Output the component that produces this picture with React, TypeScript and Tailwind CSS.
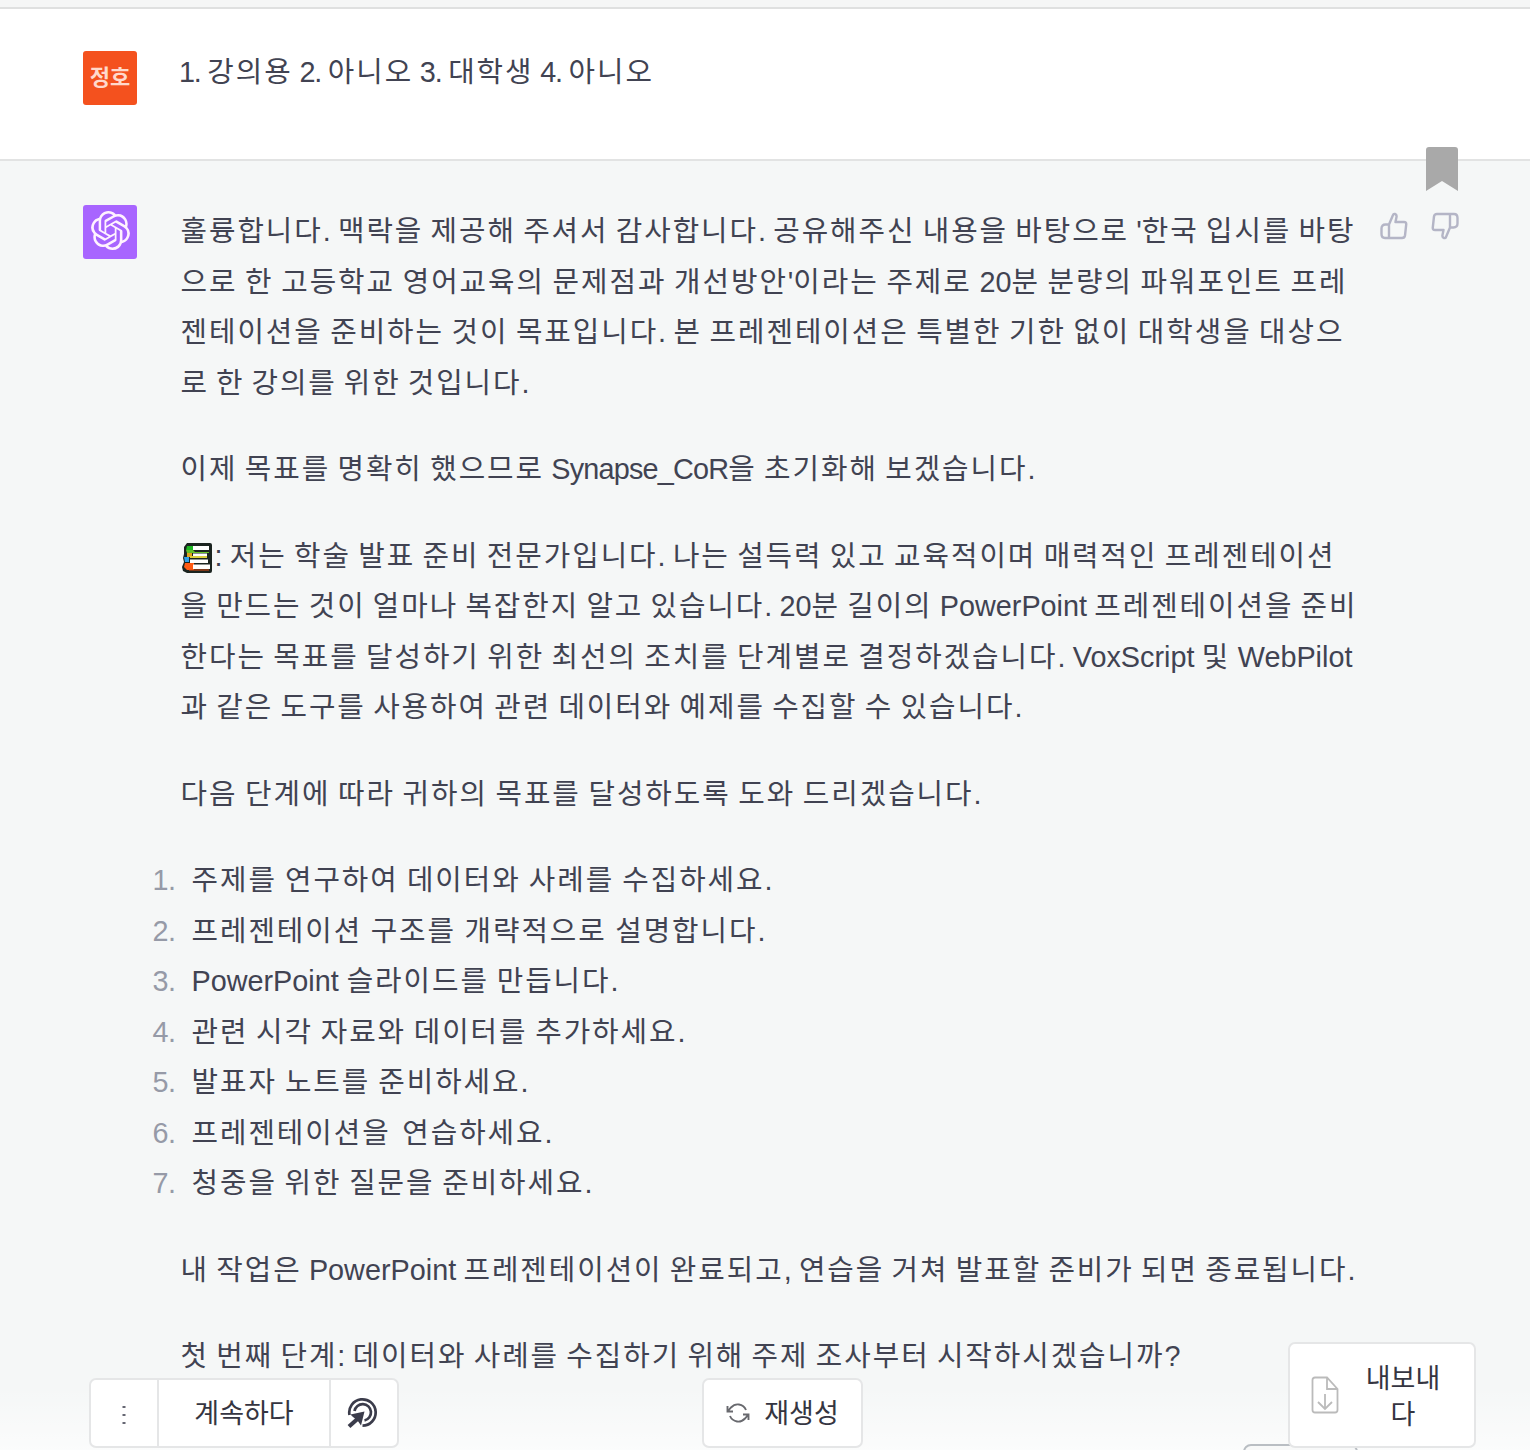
import { SiOpenai } from "react-icons/si";

type Line = { text: string; width: string; books?: boolean };

const intro: Line[][] = [
  [
    { text: "훌륭합니다. 맥락을 제공해 주셔서 감사합니다. 공유해주신 내용을 바탕으로 '한국 입시를 바탕", width: "w-[1175px]" },
    { text: "으로 한 고등학교 영어교육의 문제점과 개선방안'이라는 주제로 20분 분량의 파워포인트 프레", width: "w-[1167px]" },
    { text: "젠테이션을 준비하는 것이 목표입니다. 본 프레젠테이션은 특별한 기한 없이 대학생을 대상으", width: "w-[1164px]" },
    { text: "로 한 강의를 위한 것입니다.", width: "w-[349px]" },
  ],
  [{ text: "이제 목표를 명확히 했으므로 Synapse_CoR을 초기화해 보겠습니다.", width: "w-[855px]" }],
  [
    { text: ": 저는 학술 발표 준비 전문가입니다. 나는 설득력 있고 교육적이며 매력적인 프레젠테이션", width: "w-[1155px]", books: true },
    { text: "을 만드는 것이 얼마나 복잡한지 알고 있습니다. 20분 길이의 PowerPoint 프레젠테이션을 준비", width: "w-[1177px]" },
    { text: "한다는 목표를 달성하기 위한 최선의 조치를 단계별로 결정하겠습니다. VoxScript 및 WebPilot", width: "w-[1172px]" },
    { text: "과 같은 도구를 사용하여 관련 데이터와 예제를 수집할 수 있습니다.", width: "w-[842px]" },
  ],
  [{ text: "다음 단계에 따라 귀하의 목표를 달성하도록 도와 드리겠습니다.", width: "w-[801px]" }],
];

const steps: Line[] = [
  { text: "주제를 연구하여 데이터와 사례를 수집하세요.", width: "w-[581px]" },
  { text: "프레젠테이션 구조를 개략적으로 설명합니다.", width: "w-[574px]" },
  { text: "PowerPoint 슬라이드를 만듭니다.", width: "w-[427px]" },
  { text: "관련 시각 자료와 데이터를 추가하세요.", width: "w-[494px]" },
  { text: "발표자 노트를 준비하세요.", width: "w-[337px]" },
  { text: "프레젠테이션을 연습하세요.", width: "w-[361px]" },
  { text: "청중을 위한 질문을 준비하세요.", width: "w-[401px]" },
];

const outro: Line[][] = [
  [{ text: "내 작업은 PowerPoint 프레젠테이션이 완료되고, 연습을 거쳐 발표할 준비가 되면 종료됩니다.", width: "w-[1175px]" }],
  [{ text: "첫 번째 단계: 데이터와 사례를 수집하기 위해 주제 조사부터 시작하시겠습니까?", width: "w-[1000px]" }],
];

function BooksIcon() {
  return (
    <svg viewBox="0 0 34 30" className="inline-block h-[30px] w-[34px] shrink-0 align-[-7px]">
      <path d="M6 0h23q2 0 2 2v26q0 2-2 2H6l-4-2-1-4 2-5-1-4 1-4V4z" fill="#1b2420" />
      <path d="M6 3h6v4H5z" fill="#1fb824" />
      <path d="M12 3h16v4H12z" fill="#fff" />
      <path d="M5 7h7l2 2h14v1H6z" fill="#63bf26" />
      <path d="M6 10h5v4H6z" fill="#e0a21c" />
      <path d="M12 10.500h14v2.500H12z" fill="#fff" />
      <path d="M9 13h17v2H9z" fill="#d9cf3a" />
      <path d="M3 14h5v5H4z" fill="#2da0ea" />
      <path d="M9 16.500h18v3.500H9z" fill="#fff" />
      <path d="M4 20h9v7H6l-3-3z" fill="#ff5a14" />
      <path d="M12 21.500h17V26H12z" fill="#fff" />
      <path d="M8 26.500h20v1H8z" fill="#e24c12" />
    </svg>
  );
}

// Hangul is set wider than the Latin words around it, numbering and identifiers tighter
function MixedText({ text }: { text: string }) {
  return (
    <>
      {text.split(/([가-힣]+|\d\.|\w+_\w+)/).map((run, i) => {
        if (i % 2 === 0) return run;
        if (/^\d/.test(run)) return <span key={i} className="tracking-[-1.2px]">{run}</span>;
        if (/_/.test(run)) return <span key={i} className="tracking-[-0.8px]">{run}</span>;
        return <span key={i} className="tracking-[1.95px]">{run}</span>;
      })}
    </>
  );
}

function TextLine({ text, width, books }: Line) {
  return (
    <span className={`block h-[50.5px] whitespace-nowrap [text-align-last:justify] [word-spacing:-1.5px] ${width}`}>
      {books && <BooksIcon />}
      <MixedText text={text} />
    </span>
  );
}

function Paragraph({ lines }: { lines: Line[] }) {
  return (
    <p>
      {lines.map((line) => (
        <TextLine key={line.text} {...line} />
      ))}
    </p>
  );
}

function ThumbIcon({ down = false }: { down?: boolean }) {
  return (
    <svg
      viewBox="0 0 28 28"
      className={`size-7 ${down ? "rotate-180" : ""}`}
      fill="none"
      stroke="#b4b5c6"
      strokeWidth="2.4"
      strokeLinejoin="round"
      strokeLinecap="round"
    >
      <path d="M9 12.5 13 3q.5-1.5 2-1 2 .7 1.500 3L15.500 10H24q2.500 0 2.200 2.500l-1.200 11Q24.600 26 22 26H5q-3.500 0-3.500-4v-5.500q0-4 4-4H9V26" />
    </svg>
  );
}

function TargetIcon() {
  return (
    <svg viewBox="0 0 32 32" className="size-8" fill="none" stroke="#3b3c4b" strokeWidth="2.700">
      <path d="M2.500 18A13.200 13.200 0 1 1 15.500 28.700" />
      <path d="M7.500 14A8.300 8.300 0 1 1 17.500 23.500" />
      <path d="m2 29.500 9-8" strokeWidth="4.200" />
      <path d="M3.500 17.500 17.500 14.500 14 28.500l-3.500-5-4.500-3.500z" fill="#3b3c4b" stroke="none" />
    </svg>
  );
}

function RefreshIcon() {
  return (
    <svg viewBox="0 0 24 22" className="h-[22px] w-6" fill="none" stroke="#68696e" strokeWidth="1.900">
      <path d="M1.500 4v5.500H7M2 9l3-3.500Q8.500 1.800 13 2.500q5 .8 7 5.500" />
      <path d="M22.500 18v-5.500H17M22 13l-3 3.500q-3.500 3.700-8 3-5-.8-7-5.500" />
    </svg>
  );
}

function ExportIcon() {
  return (
    <svg viewBox="0 0 28 38" className="h-[38px] w-7 shrink-0" fill="none" stroke="#bbb" strokeWidth="1.800">
      <path d="M4 1.500h12L26.500 13v21q0 2.500-2.500 2.500H4Q1.500 36.500 1.500 34V4Q1.500 1.500 4 1.500ZM16 1.500V13h10.500M14 18v14M7 26l7 7 7-7" />
    </svg>
  );
}

export default function App() {
  return (
    <div className="relative flex h-[1450px] w-[1530px] flex-col overflow-hidden bg-[#f5f7f7] font-['Liberation_Sans','Noto_Sans_CJK_KR',sans-serif] text-[28.8px] leading-[50.5px] text-[#414352]">
      <div className="h-[9px] shrink-0 border-b-2 border-[#dfe0e0] bg-[#f5f6f6]" />

      {/* User message */}
      <div className="flex h-[152px] shrink-0 border-b-2 border-[#e2e3e3] bg-white pt-[42px] pl-[83px]">
        <div className="flex size-[54px] items-center justify-center rounded-[3px] bg-[#f4511e] text-[22px] font-bold text-[#ffd9cc]">
          정호
        </div>
        <div className="-mt-1 ml-[42px]">
          <TextLine text="1. 강의용 2. 아니오 3. 대학생 4. 아니오" width="w-[475px]" />
        </div>
      </div>

      {/* Assistant message */}
      <div className="flex pt-[44px] pl-[83px]">
        <div className="flex size-[54px] shrink-0 items-center justify-center rounded-[3px] bg-[#a865ff] pb-1 text-[#fff2ff]">
          <SiOpenai size={39} />
        </div>
        <div className="mt-px ml-[43.5px] flex w-[1177px] shrink-0 flex-col gap-9">
          {intro.map((lines) => (
            <Paragraph key={lines[0].text} lines={lines} />
          ))}
          <ol className="-ml-[41px]">
            {steps.map((step, i) => (
              <li key={step.text} className="flex">
                <span className="mr-4 w-9 text-right tracking-[-0.5px] text-[#969aa7]">{i + 1}.</span>
                <TextLine {...step} />
              </li>
            ))}
          </ol>
          {outro.map((lines) => (
            <Paragraph key={lines[0].text} lines={lines} />
          ))}
        </div>
        <div className="mt-[7px] ml-[22.5px] flex h-7 gap-[23px]">
          <ThumbIcon />
          <ThumbIcon down />
        </div>
      </div>

      {/* Bookmark ribbon over the row border */}
      <svg viewBox="0 0 32 44" className="absolute top-[147px] left-[1426px] h-11 w-8">
        <path d="M3 0h26q3 0 3 3v41L16 34 0 44V3q0-3 3-3Z" fill="#a9a9a9" />
      </svg>

      {/* Floating actions */}
      <div className="absolute inset-x-0 bottom-0 h-16 bg-linear-to-b from-white/0 to-white/60" />
      <div className="absolute top-[1444px] left-[1243px] h-8 w-[115px] rounded-lg border-2 border-[#b9bec3] bg-[#f8f9f9]" />
      <div className="absolute inset-x-0 bottom-[2px] flex items-end pl-[89px] text-[27px] text-[#353541]">
        <div className="flex h-[70px] w-[310px] rounded-[7px] border-2 border-[#e5e6e7] bg-white">
          <div className="flex w-[66px] items-center justify-center pt-1">
            <svg viewBox="0 0 4 20" className="h-5 w-1" fill="#666773">
              <path d="M.5 1h3v2h-3zM.5 9h3v2h-3zM.5 17h3v2h-3z" />
            </svg>
          </div>
          <div className="flex w-[174px] items-center justify-center border-x-2 border-[#e5e6e7] pt-[3px]">계속하다</div>
          <div className="flex w-[66px] items-center justify-center pr-[2px]">
            <TargetIcon />
          </div>
        </div>
        <div className="ml-[303px] flex h-[70px] w-[161px] items-center justify-center gap-[14px] rounded-[7px] border-2 border-[#e5e6e7] bg-white">
          <RefreshIcon />
          <span className="pt-[3px]">재생성</span>
        </div>
        <div className="ml-[425px] flex h-[106px] w-[188px] items-center rounded-[7px] border-2 border-[#e5e6e7] bg-white pl-[21px]">
          <ExportIcon />
          <div className="ml-[26px] w-[76px] pt-[3px] text-center leading-9">
            내보내
            <br />다
          </div>
        </div>
      </div>
    </div>
  );
}
